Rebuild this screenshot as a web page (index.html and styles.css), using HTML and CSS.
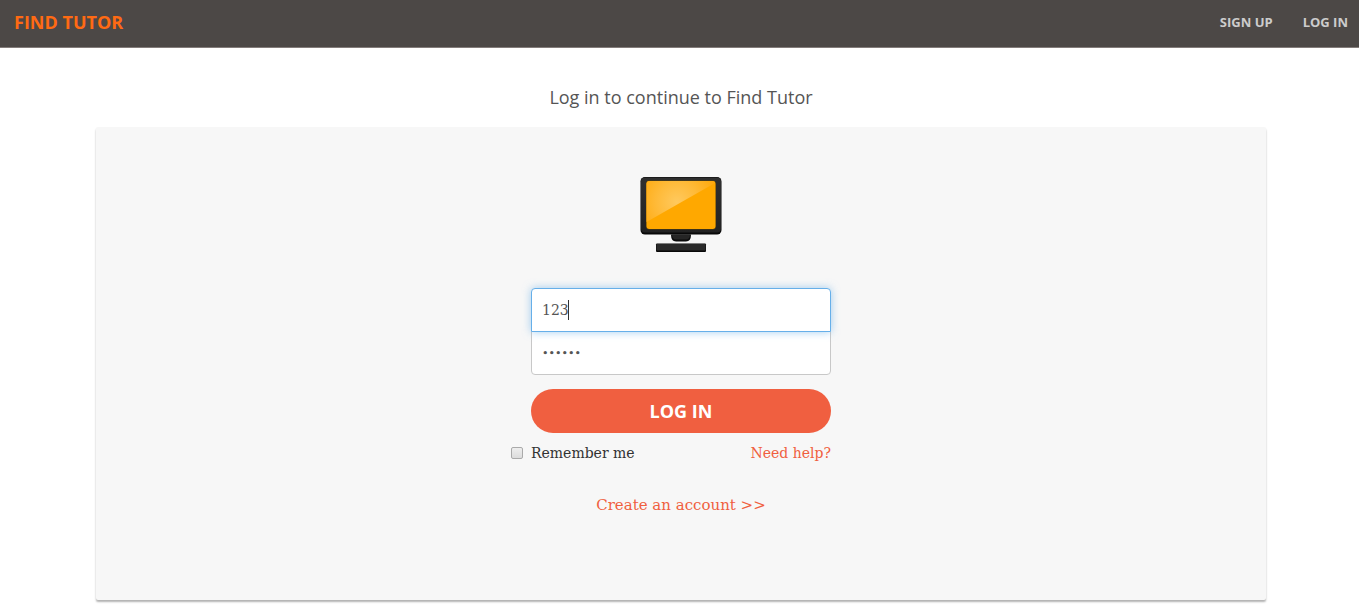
FILE: index.html
```
<!DOCTYPE html>
<html lang="en">
<head>
<meta charset="utf-8">
<meta name="viewport" content="width=device-width, initial-scale=1">
<title>Log in - Find Tutor</title>
<link rel="stylesheet" href="styles.css">
</head>
<body>
<header class="navbar">
  <a class="brand" href="#">FIND TUTOR</a>
  <nav class="nav-links">
    <a class="nav-link" href="#">SIGN UP</a>
    <a class="nav-link" href="#">LOG IN</a>
  </nav>
</header>
<main class="page">
  <h1 class="title">Log in to continue to Find Tutor</h1>
  <section class="card">
    <svg class="logo" viewBox="0 0 96 96" aria-hidden="true">
      <defs>
        <radialGradient id="shine" gradientUnits="userSpaceOnUse" cx="44" cy="36" r="42">
          <stop offset="0" stop-color="#ffc95e"/>
          <stop offset="0.5" stop-color="#ffba38"/>
          <stop offset="1" stop-color="#ffa90c"/>
        </radialGradient>
        <linearGradient id="frame" x1="0" y1="0" x2="0" y2="1">
          <stop offset="0" stop-color="#303030"/>
          <stop offset="1" stop-color="#222"/>
        </linearGradient>
      </defs>
      <rect x="7.500" y="11" width="81" height="57.500" rx="4.500" fill="#080808"/>
      <rect x="8" y="11.500" width="80" height="55" rx="4" fill="url(#frame)"/>
      <rect x="13" y="14.500" width="70" height="49" rx="3" fill="#54400f"/>
      <rect x="13.500" y="15" width="69" height="48" rx="3" fill="#ffa800"/>
      <path d="M16.500 15H79.500Q82 15 82 17L13.500 56V18Q13.500 15 16.500 15Z" fill="url(#shine)"/>
      <path d="M38 68.500H58Q58 75.500 53 75.500H43Q38 75.500 38 68.500Z" fill="#0b0b0b"/>
      <path d="M39 68.500H57Q57 73.500 53 73.500H43Q39 73.500 39 68.500Z" fill="#252525"/>
      <rect x="23" y="77.500" width="50" height="8.500" rx="1" fill="#080808"/>
      <rect x="23.500" y="78" width="49" height="6.500" fill="#2a2a2a"/>
    </svg>
    <form class="form">
      <div class="field">
        <input class="input input-top" type="text" value="123" aria-label="Username">
        <span class="caret" aria-hidden="true"></span>
      </div>
      <input class="input input-bottom" type="password" value="123456" aria-label="Password">
      <button class="submit" type="button">LOG IN</button>
      <div class="options">
        <label class="remember"><input class="check" type="checkbox">Remember me</label>
        <a class="help" href="#">Need help?</a>
      </div>
    </form>
    <a class="create" href="#">Create an account &gt;&gt;</a>
  </section>
</main>
</body>
</html>
```
FILE: styles.css
```
* { box-sizing: border-box; }
body {
  margin: 0;
  background: #fff;
  color: #333;
  font-family: "DejaVu Serif", serif;
  font-size: 14px;
}
a { color: #f05f40; text-decoration: none; }
.navbar {
  display: flex;
  justify-content: space-between;
  align-items: center;
  padding: 10px 11px 13px 14px;
  background: #4c4846;
  border-bottom: 1px solid #837c7a;
  font-family: "Open Sans", sans-serif;
  font-weight: 700;
  line-height: 24px;
}
.brand { color: #ff6a13; font-size: 18px; }
.nav-links { display: flex; gap: 30px; }
.nav-link { color: #ccc; font-size: 13px; }
.page {
  max-width: 1173px;
  margin: 0 auto;
  padding: 37px 0 12px 3px;
}
.title {
  margin: 0 0 18px;
  color: #555;
  font: 400 18px/24px "Open Sans", sans-serif;
  text-align: center;
}
.card {
  display: flex;
  flex-direction: column;
  align-items: center;
  padding: 39px 20px 83px;
  background: #f7f7f7;
  border-radius: 2px;
  box-shadow: 0 2px 2px rgba(0, 0, 0, 0.3);
}
.logo { width: 96px; height: 96px; }
.form {
  width: 100%;
  max-width: 300px;
  margin-top: 26px;
}
.field { position: relative; z-index: 1; }
.input {
  display: block;
  width: 100%;
  height: 44px;
  padding: 0 10px;
  border: 1px solid #c8c8c8;
  outline: 0;
  background: #fff;
  color: #555;
  font-family: "DejaVu Serif", serif;
  font-size: 14px;
}
.input-top {
  border-color: #66afe9;
  border-radius: 4px 4px 0 0;
  box-shadow: 0 0 8px rgba(102, 175, 233, 0.6);
}
.input-bottom {
  margin-top: -1px;
  border-radius: 0 0 4px 4px;
  font-size: 11px;
}
.caret {
  position: absolute;
  top: 12px;
  left: 37px;
  width: 1px;
  height: 20px;
  background: #333;
}
.submit {
  width: 100%;
  height: 44px;
  margin-top: 14px;
  border: 0;
  border-radius: 22px;
  background: #f05f40;
  color: #fff;
  font: 700 18px/24px "Open Sans", sans-serif;
}
.options {
  display: flex;
  justify-content: space-between;
  margin: 10px 0 0 -20px;
  line-height: 20px;
}
.remember { display: flex; align-items: center; }
.check {
  appearance: none;
  width: 12px;
  height: 12px;
  margin: 0 8px 0 0;
  border: 1px solid #aaa;
  border-radius: 2px;
  background: linear-gradient(#eee, #dcdcdc);
}
.check:checked { background: #f05f40; }
.create {
  margin-top: 30px;
  font-size: 15px;
  line-height: 24px;
}
```
